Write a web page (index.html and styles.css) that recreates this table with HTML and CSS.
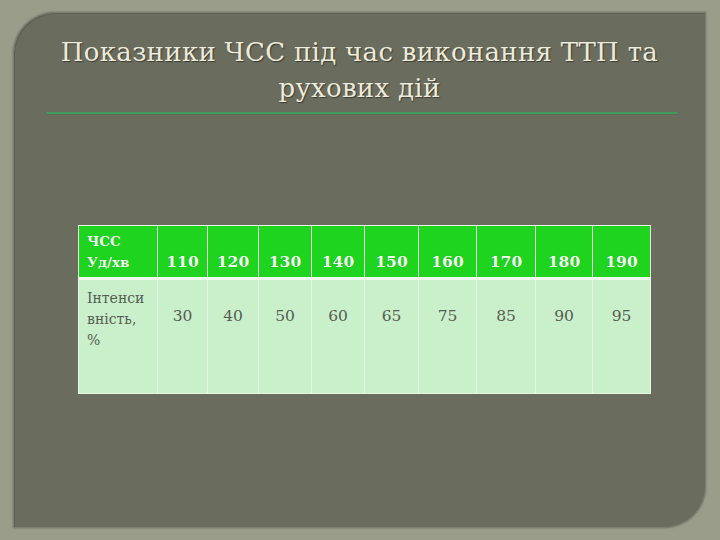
FILE: index.html
```html
<!DOCTYPE html>
<html lang="uk">
<head>
<meta charset="utf-8">
<link rel="stylesheet" href="styles.css">
</head>
<body>
<div class="slide">
  <div class="panel">
    <h1 class="title">Показники ЧСС під час виконання ТТП та<br>рухових дій</h1>
    <div class="rule"></div>
    <table class="grid">
      <colgroup>
        <col style="width:79px"><col style="width:50px"><col style="width:51px"><col style="width:53px"><col style="width:53px"><col style="width:54px"><col style="width:58px"><col style="width:59px"><col style="width:57px"><col style="width:58px">
      </colgroup>
      <tr class="head">
        <th class="lbl">ЧСС<br>Уд/хв</th>
        <th>110</th><th>120</th><th>130</th><th>140</th><th>150</th><th>160</th><th>170</th><th>180</th><th>190</th>
      </tr>
      <tr class="body">
        <td class="lbl">Інтенси<br>вність,<br>%</td>
        <td>30</td><td>40</td><td>50</td><td>60</td><td>65</td><td>75</td><td>85</td><td>90</td><td>95</td>
      </tr>
    </table>
  </div>
</div>
</body>
</html>
```
FILE: styles.css
```css
html, body {
  margin: 0;
  padding: 0;
}
body {
  width: 720px;
  height: 540px;
  background: #9b9d8b;
  font-family: "DejaVu Serif", "Liberation Serif", serif;
}
.slide {
  width: 720px;
  height: 540px;
  padding: 12px 14px 12px 13px;
  box-sizing: border-box;
}
.panel {
  width: 693px;
  height: 516px;
  box-sizing: border-box;
  background: #6a6c5e;
  border: 1px solid #7d7f71;
  border-radius: 42px 0 42px 0;
  box-shadow: inset 1px 1px 0 #5e6054, 0 0 2px #5f6155;
  padding-top: 21px;
}
.title {
  margin: 0;
  font-weight: normal;
  font-size: 26px;
  line-height: 36px;
  color: #ecebdc;
  text-align: center;
  letter-spacing: 0.3px;
  text-shadow: 1px 1px 1px #3c3d33;
}
.rule {
  margin: 6px 28px 0 33px;
  height: 2px;
  background: #3f9c5c;
  border-bottom: 1px solid #5e6a52;
}
.grid {
  margin: 110px 0 0 64px;
  width: 573px;
  border-collapse: collapse;
  table-layout: fixed;
}
.grid th, .grid td {
  border: 1px solid #e6f5e4;
  padding: 0;
}
.head th {
  height: 45px;
  background: #1ed41f;
  color: #f2fff0;
  font-weight: bold;
  font-size: 15.5px;
  vertical-align: bottom;
  padding-bottom: 6px;
  text-shadow: 0 0 1px #189a18;
  border-bottom: 3px solid #eef8ec;
}
.head th.lbl {
  text-align: left;
  padding-left: 8px;
  font-size: 13.5px;
  line-height: 21px;
  padding-bottom: 4px;
}
.body td {
  height: 86px;
  background: #c9f0ca;
  color: #575c52;
  font-size: 15.5px;
  text-align: center;
  vertical-align: top;
  padding-top: 27px;
}
.body td.lbl {
  text-align: left;
  padding-left: 8px;
  padding-top: 8px;
  font-size: 14px;
  line-height: 21px;
}
```
